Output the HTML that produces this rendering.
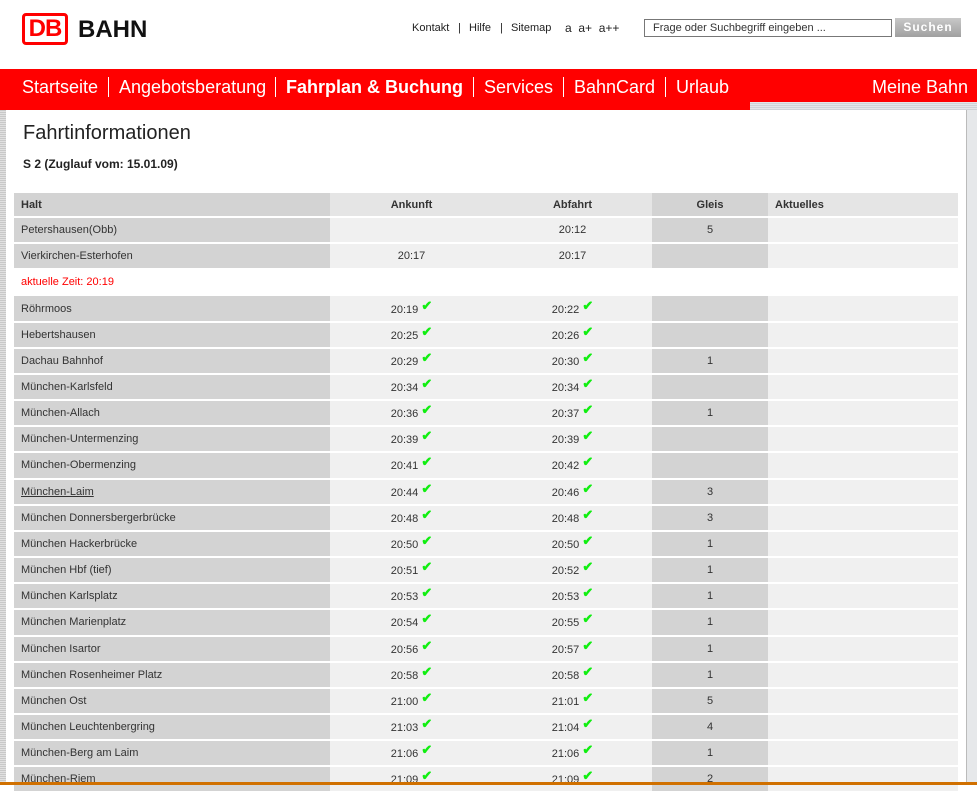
<!DOCTYPE html>
<html><head><meta charset="utf-8"><style>
*{margin:0;padding:0;box-sizing:border-box}
body{width:977px;height:785px;overflow:hidden;background:#fff;font-family:"Liberation Sans",Arial,sans-serif;position:relative;color:#333}
.logo{position:absolute;left:22px;top:13px;width:46px;height:32px;border:3px solid #f00;border-radius:4px;color:#f00;font-weight:bold;font-size:24px;line-height:26px;text-align:center;letter-spacing:-1px}
.bahn{position:absolute;left:78px;top:16px;font-weight:bold;font-size:24px;color:#111}
.top{position:absolute;top:22px;font-size:11px;color:#222}
.search{position:absolute;left:644px;top:19px;width:248px;height:18px;border:1px solid #777;font-size:11px;padding:2px 8px;color:#333}
.btn{position:absolute;left:895px;top:18px;width:66px;height:19px;background:linear-gradient(#c8c8c8,#a0a0a0);color:#fff;font-weight:bold;font-size:12px;letter-spacing:1px;text-align:center;line-height:19px}
.nav{position:absolute;left:0;top:69px;width:977px;height:33px;background:#f00}
.nav2{position:absolute;left:0;top:102px;width:750px;height:8px;background:#f00}
.strip{position:absolute;left:750px;top:102px;width:227px;height:8px;background:repeating-linear-gradient(#e4e6e8 0 1px,#cfd3d6 1px 2px)}
.nav span{position:absolute;top:8px;color:#fff;font-size:18px}
.sep{position:absolute;top:8px;width:1px;height:20px;background:#fff}
.lside{position:absolute;left:0;top:110px;width:6px;height:675px;background:repeating-linear-gradient(#c8c8c8 0 1px,#e0e0e0 1px 2px)}
.rside{position:absolute;left:966px;top:110px;width:11px;height:675px;background:repeating-linear-gradient(90deg,#bbb 0 1px,#e6e8ea 1px 11px)}
h1{position:absolute;left:23px;top:122px;font-size:20px;font-weight:normal;color:#222}
.sub{position:absolute;left:23px;top:157px;font-size:12px;font-weight:bold;color:#222}
table{position:absolute;left:14px;top:193px;width:944px;border-collapse:collapse;font-size:11px;color:#333}
td,th{height:26.17px;border-bottom:2px solid #fff;padding:0 7px;vertical-align:middle}
th{height:24px;font-weight:bold;text-align:center}
td:nth-child(1),th:nth-child(1){width:316px;text-align:left;background:#d3d3d3}
td:nth-child(2),td:nth-child(3){text-align:center;background:#f0f0f0}
th:nth-child(2),th:nth-child(3){background:#e5e5e5}
td:nth-child(2),th:nth-child(2){width:163px}
td:nth-child(3),th:nth-child(3){width:159px}
td:nth-child(4),th:nth-child(4){width:116px;text-align:center;background:#d3d3d3}
td:nth-child(5){background:#f0f0f0}
th:nth-child(5){background:#e5e5e5;text-align:left}
tr.z td{background:#fff!important;color:#f00}
.c{color:#1e1;font-weight:bold;font-size:13px;position:relative;top:-3px}
.bottom{position:absolute;left:0;top:782px;width:977px;height:3px;background:#d07000}
</style></head><body>
<div class="logo">DB</div><div class="bahn">BAHN</div>
<div class="top" style="left:412px">Kontakt</div>
<div class="top" style="left:458px">|</div>
<div class="top" style="left:469px">Hilfe</div>
<div class="top" style="left:500px">|</div>
<div class="top" style="left:511px">Sitemap</div>
<div class="top" style="left:565px;font-size:12px;top:21px">a&nbsp; a+&nbsp; a++</div>
<div class="search">Frage oder Suchbegriff eingeben ...</div>
<div class="btn">Suchen</div>
<div class="nav">
<span style="left:22px">Startseite</span><div class="sep" style="left:108px"></div>
<span style="left:119px">Angebotsberatung</span><div class="sep" style="left:275px"></div>
<span style="left:286px;font-weight:bold">Fahrplan &amp; Buchung</span><div class="sep" style="left:473px"></div>
<span style="left:484px">Services</span><div class="sep" style="left:563px"></div>
<span style="left:574px">BahnCard</span><div class="sep" style="left:665px"></div>
<span style="left:676px">Urlaub</span>
<span style="left:872px">Meine Bahn</span>
</div>
<div class="nav2"></div><div class="strip"></div>
<div class="lside"></div><div class="rside"></div>
<h1>Fahrtinformationen</h1>
<div class="sub">S 2 (Zuglauf vom: 15.01.09)</div>
<table>
<tr><th>Halt</th><th>Ankunft</th><th>Abfahrt</th><th>Gleis</th><th>Aktuelles</th></tr>
<tr><td>Petershausen(Obb)</td><td></td><td>20:12</td><td>5</td><td></td></tr>
<tr><td>Vierkirchen-Esterhofen</td><td>20:17</td><td>20:17</td><td></td><td></td></tr>
<tr class="z"><td>aktuelle Zeit: 20:19</td><td></td><td></td><td></td><td></td></tr>
<tr><td>Röhrmoos</td><td>20:19 <span class="c">✔</span></td><td>20:22 <span class="c">✔</span></td><td></td><td></td></tr>
<tr><td>Hebertshausen</td><td>20:25 <span class="c">✔</span></td><td>20:26 <span class="c">✔</span></td><td></td><td></td></tr>
<tr><td>Dachau Bahnhof</td><td>20:29 <span class="c">✔</span></td><td>20:30 <span class="c">✔</span></td><td>1</td><td></td></tr>
<tr><td>München-Karlsfeld</td><td>20:34 <span class="c">✔</span></td><td>20:34 <span class="c">✔</span></td><td></td><td></td></tr>
<tr><td>München-Allach</td><td>20:36 <span class="c">✔</span></td><td>20:37 <span class="c">✔</span></td><td>1</td><td></td></tr>
<tr><td>München-Untermenzing</td><td>20:39 <span class="c">✔</span></td><td>20:39 <span class="c">✔</span></td><td></td><td></td></tr>
<tr><td>München-Obermenzing</td><td>20:41 <span class="c">✔</span></td><td>20:42 <span class="c">✔</span></td><td></td><td></td></tr>
<tr><td><u>München-Laim</u></td><td>20:44 <span class="c">✔</span></td><td>20:46 <span class="c">✔</span></td><td>3</td><td></td></tr>
<tr><td>München Donnersbergerbrücke</td><td>20:48 <span class="c">✔</span></td><td>20:48 <span class="c">✔</span></td><td>3</td><td></td></tr>
<tr><td>München Hackerbrücke</td><td>20:50 <span class="c">✔</span></td><td>20:50 <span class="c">✔</span></td><td>1</td><td></td></tr>
<tr><td>München Hbf (tief)</td><td>20:51 <span class="c">✔</span></td><td>20:52 <span class="c">✔</span></td><td>1</td><td></td></tr>
<tr><td>München Karlsplatz</td><td>20:53 <span class="c">✔</span></td><td>20:53 <span class="c">✔</span></td><td>1</td><td></td></tr>
<tr><td>München Marienplatz</td><td>20:54 <span class="c">✔</span></td><td>20:55 <span class="c">✔</span></td><td>1</td><td></td></tr>
<tr><td>München Isartor</td><td>20:56 <span class="c">✔</span></td><td>20:57 <span class="c">✔</span></td><td>1</td><td></td></tr>
<tr><td>München Rosenheimer Platz</td><td>20:58 <span class="c">✔</span></td><td>20:58 <span class="c">✔</span></td><td>1</td><td></td></tr>
<tr><td>München Ost</td><td>21:00 <span class="c">✔</span></td><td>21:01 <span class="c">✔</span></td><td>5</td><td></td></tr>
<tr><td>München Leuchtenbergring</td><td>21:03 <span class="c">✔</span></td><td>21:04 <span class="c">✔</span></td><td>4</td><td></td></tr>
<tr><td>München-Berg am Laim</td><td>21:06 <span class="c">✔</span></td><td>21:06 <span class="c">✔</span></td><td>1</td><td></td></tr>
<tr><td>München-Riem</td><td>21:09 <span class="c">✔</span></td><td>21:09 <span class="c">✔</span></td><td>2</td><td></td></tr>
</table>
<div class="bottom"></div>
</body></html>
